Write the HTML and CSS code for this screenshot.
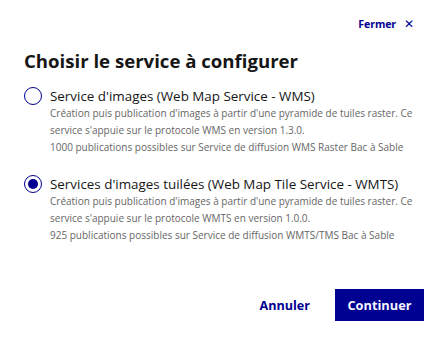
FILE: index.html
```html
<!DOCTYPE html>
<html lang="fr">
<head>
<meta charset="utf-8">
<link rel="stylesheet" href="styles.css">
</head>
<body>
<div class="modal">
  <div class="modal-header">
    <button class="close-btn">Fermer <span class="close-x">✕</span></button>
  </div>
  <h1 class="title">Choisir le service à configurer</h1>
  <div class="options">
    <div class="option">
      <span class="radio"></span>
      <div class="option-body">
        <div class="option-label">Service d'images (Web Map Service - WMS)</div>
        <div class="option-desc">Création puis publication d'images à partir d'une pyramide de tuiles raster. Ce service s'appuie sur le protocole WMS en version 1.3.0.</div>
        <div class="option-desc">1000 publications possibles sur Service de diffusion WMS Raster Bac à Sable</div>
      </div>
    </div>
    <div class="option">
      <span class="radio checked"></span>
      <div class="option-body">
        <div class="option-label">Services d'images tuilées (Web Map Tile Service - WMTS)</div>
        <div class="option-desc">Création puis publication d'images à partir d'une pyramide de tuiles raster. Ce service s'appuie sur le protocole WMTS en version 1.0.0.</div>
        <div class="option-desc">925 publications possibles sur Service de diffusion WMTS/TMS Bac à Sable</div>
      </div>
    </div>
  </div>
  <div class="footer">
    <button class="btn-tertiary">Annuler</button>
    <button class="btn-primary">Continuer</button>
  </div>
</div>
</body>
</html>
```

FILE: styles.css
```css
* { box-sizing: border-box; }
html, body { margin: 0; padding: 0; background: #fff; }
body { font-family: "Open Sans", "Liberation Sans", sans-serif; color: #161616; }
.modal { width: 448px; height: 346px; padding: 16px 24px 0 24px; display: flex; flex-direction: column; }
.modal-header { display: flex; justify-content: flex-end; height: 16px; }
.close-btn { border: 0; background: none; padding: 0 10px 0 0; font: inherit; font-size: 10.6px; font-weight: 700; color: #000091; display: flex; align-items: center; gap: 8px; line-height: 16px; letter-spacing: -0.1px; }
.close-x { font-size: 11.5px; font-weight: 400; }
.title { margin: 15px 0 0 0; font-size: 18.6px; line-height: 28px; font-weight: 700; color: #161616; }
.options { margin-top: 12px; display: flex; flex-direction: column; gap: 19px; }
.option { display: flex; gap: 8px; }
.radio { width: 18px; height: 18px; border: 1px solid #000091; border-radius: 50%; flex: none; position: relative; }
.radio.checked::after { content: ""; position: absolute; left: 3px; top: 3px; width: 10px; height: 10px; border-radius: 50%; background: #000091; }
.option-body { display: flex; flex-direction: column; }
.option-label { font-size: 13.4px; line-height: 18px; font-weight: 500; color: #161616; }
.option-desc { font-size: 10px; line-height: 17px; color: #666; }
.footer { margin-top: auto; margin-bottom: 25px; display: flex; justify-content: flex-end; align-items: center; gap: 25px; }
.btn-tertiary { border: 0; background: none; font: inherit; font-size: 12.6px; font-weight: 700; color: #000091; padding: 0; }
.btn-primary { border: 0; background: #000091; color: #f5f5fe; font: inherit; font-size: 12.8px; font-weight: 700; height: 32px; width: 89px; padding: 0; }
```
